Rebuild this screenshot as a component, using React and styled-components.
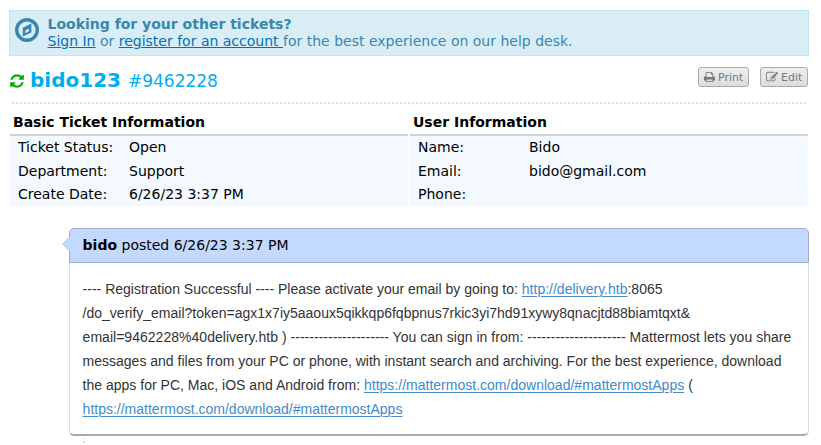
import React from "react";
import styled, { createGlobalStyle } from "styled-components";

const Global = createGlobalStyle`
  * { box-sizing: border-box; }
  body {
    margin: 0;
    background: #fff;
    color: #000;
    font: 14px/17px "DejaVu Sans", sans-serif;
    overflow: hidden;
  }
`;

const Page = styled.main`
  width: 821px;
  height: 445px;
  padding: 10px 12px 0 9px;
  overflow: hidden;
`;

const Banner = styled.section`
  display: flex;
  height: 46px;
  padding: 5px 5px 0;
  border: 1px solid #bce8f1;
  background: #d9edf7;
  color: #3a87ad;
`;

const BannerText = styled.div`
  margin-left: 8.5px;
  white-space: nowrap;
`;

const BannerLink = styled.a`
  color: #0072bc;
  text-decoration: underline;
`;

const Icon = styled.svg`
  display: block;
  flex: none;
  fill: currentColor;
`;

const CompassIcon = styled(Icon)`
  margin-top: 2px;
`;

const TitleRow = styled.header`
  display: flex;
  align-items: flex-start;
  height: 46px;
  padding-top: 11px;
`;

const RefreshLink = styled.a`
  margin: 6px 5px 0 0;
  color: #00b000;
`;

const Subject = styled.h1`
  margin: 0;
  color: #00aeef;
  font-size: 20px;
  line-height: 27px;
`;

const TicketNumber = styled.small`
  margin-left: 7px;
  color: #00aeef;
  font-size: 17px;
  line-height: 28px;
`;

const Actions = styled.div`
  display: flex;
  gap: 11px;
  margin-left: auto;
  margin-right: 1px;
`;

const ActionButton = styled.button`
  display: flex;
  align-items: center;
  gap: ${(p) => p.$gap}px;
  width: ${(p) => p.$width}px;
  height: 20px;
  padding: 1px 0 0 5px;
  border: 1px solid #aaa;
  border-radius: 3px;
  background: linear-gradient(#efefef, #dcdcdc);
  color: #777;
  font: 11px/18px "DejaVu Sans", sans-serif;
`;

const ButtonIcon = styled(Icon)`
  margin-top: -1px;
`;

const Divider = styled.div`
  width: 796px;
  height: 2px;
  margin-left: 3px;
  background: repeating-linear-gradient(90deg, #ddd 0 2px, transparent 2px 4px);
`;

const InfoGrid = styled.div`
  display: grid;
  grid-template-columns: 398px 398px;
  gap: 2px;
  margin: 8px 0 0 1px;
`;

const InfoTitle = styled.h2`
  height: 24px;
  margin: 0;
  padding: 2px 3px 0;
  border-bottom: 2px solid #cfd3d6;
  font-size: 14px;
  line-height: 17px;
`;

const InfoRows = styled.dl`
  display: grid;
  grid-template-columns: 111px 1fr;
  grid-template-rows: 24px 23px 23px;
  height: 70px;
  margin: 0;
  padding-left: 8px;
  background: #f4f9ff;
  line-height: 23px;
`;

const InfoLabel = styled.dt``;

const InfoValue = styled.dd`
  margin: 0;
`;

const Entry = styled.article`
  width: 740px;
  margin: 22px 0 0 60px;
`;

const EntryHeader = styled.header`
  position: relative;
  height: 35px;
  padding: 8px 12.6px;
  border: 1px solid #9cabcf;
  border-radius: 5px 5px 0 0;
  background: #c3d9ff;
`;

const Pointer = styled.svg`
  position: absolute;
  left: -8px;
  top: 7px;
`;

const EntryBody = styled.div`
  height: 173px;
  padding: 14px 12px 0 12.6px;
  border: 1px solid #ddd;
  border-top: 0;
  border-bottom: 2px solid #aaa;
  border-radius: 0 0 5px 5px;
  color: #333;
  font: 14px/24px "Liberation Sans", Arial, sans-serif;
  white-space: nowrap;
`;

const Line = styled.div`
  letter-spacing: ${(p) => p.$tracking || 0}px;
`;

const TextLink = styled.a`
  color: #428bca;
  text-decoration: underline;
  text-decoration-thickness: 1px;
  text-underline-offset: 2px;
`;

const ThreadLine = styled.div`
  width: 2px;
  height: 5px;
  margin: 2px 0 0 74px;
  background: repeating-linear-gradient(#ddd 0 1px, transparent 1px 3px, #ddd 3px 5px);
`;

const REFRESH =
  "M1639 1056q0 5-1 7-64 268-268 434.5t-478 166.5q-146 0-282.5-55t-243.5-157l-129 129q-19 19-45 19t-45-19-19-45v-448q0-26 19-45t45-19h448q26 0 45 19t19 45-19 45l-137 137q71 66 161 102t187 36q134 0 250-65t186-179q11-17 53-117 8-23 30-23h192q13 0 22.5 9.5t9.5 22.5zm25-800v448q0 26-19 45t-45 19h-448q-26 0-45-19t-19-45 19-45l138-138q-148-137-349-137-134 0-250 65t-186 179q-11 17-53 117-8 23-30 23h-199q-13 0-22.5-9.5t-9.5-22.5v-7q65-268 270-434.5t480-166.5q146 0 284 55.5t245 156.5l130-129q19-19 45-19t45 19 19 45z";
const PRINT =
  "M448 1536h896v-256h-896v256zm0-640h896v-384h-160q-40 0-68-28t-28-68v-160h-640v640zm1152 64q0-26-19-45t-45-19-45 19-19 45 19 45 45 19 45-19 19-45zm128 0v416q0 13-9.5 22.5t-22.5 9.5h-224v160q0 40-28 68t-68 28h-960q-40 0-68-28t-28-68v-160h-224q-13 0-22.5-9.5t-9.5-22.5v-416q0-79 56.5-135.5t135.5-56.5h64v-544q0-40 28-68t68-28h672q40 0 88 20t76 48l152 152q28 28 48 76t20 88v256h64q79 0 135.5 56.5t56.5 135.5z";
const EDIT =
  "M888 1184l116-116-152-152-116 116v56h96v96h56zm440-720q-16-16-33 1l-350 350q-17 17-1 33t33-1l350-350q17-17 1-33zm80 594v190q0 119-84.5 203.5t-203.5 84.5h-832q-119 0-203.5-84.5t-84.5-203.5v-832q0-119 84.5-203.5t203.5-84.5h832q63 0 117 25 15 7 18 23 3 17-9 29l-49 49q-14 14-32 8-23-6-45-6h-832q-66 0-113 47t-47 113v832q0 66 47 113t113 47h832q66 0 113-47t47-113v-126q0-13 9-22l64-64q15-15 35-7t20 29zm-96-738l288 288-672 672h-288v-288zm444 132l-92 92-288-288 92-92q28-28 68-28t68 28l152 152q28 28 28 68t-28 68z";

function InfoPanel({ title, rows }) {
  return (
    <section>
      <InfoTitle>{title}</InfoTitle>
      <InfoRows>
        {rows.map(([label, value]) => (
          <React.Fragment key={label}>
            <InfoLabel>{label}:</InfoLabel>
            <InfoValue>{value}</InfoValue>
          </React.Fragment>
        ))}
      </InfoRows>
    </section>
  );
}

export default function App() {
  return (
    <>
      <Global />
      <Page>
        <Banner>
          <CompassIcon width="24" height="24" viewBox="0 0 24 24">
            <circle cx="12" cy="12" r="10.3" fill="none" stroke="currentColor" strokeWidth="3.4" />
            <path fillRule="evenodd" d="M16.4 5.4V14.4L7.8 18.6V9.8ZM13.8 10.6L10.3 12.6V15.2L13.8 13.5Z" />
          </CompassIcon>
          <BannerText>
            <strong>Looking for your other tickets?</strong>
            <br />
            <BannerLink>Sign In</BannerLink> or <BannerLink>register for an account </BannerLink>
            for the best experience on our help desk.
          </BannerText>
        </Banner>

        <TitleRow>
          <RefreshLink>
            <Icon width="16" height="16" viewBox="0 0 1792 1792"><path d={REFRESH} /></Icon>
          </RefreshLink>
          <Subject>bido123</Subject>
          <TicketNumber>#9462228</TicketNumber>
          <Actions>
            <ActionButton $width={51} $gap={3}>
              <ButtonIcon width="11" height="12" viewBox="64 0 1664 1792"><path d={PRINT} /></ButtonIcon>
              Print
            </ActionButton>
            <ActionButton $width={48} $gap={3}>
              <ButtonIcon width="12" height="12" viewBox="0 0 1792 1792"><path d={EDIT} /></ButtonIcon>
              Edit
            </ActionButton>
          </Actions>
        </TitleRow>
        <Divider />

        <InfoGrid>
          <InfoPanel
            title="Basic Ticket Information"
            rows={[["Ticket Status", "Open"], ["Department", "Support"], ["Create Date", "6/26/23 3:37 PM"]]}
          />
          <InfoPanel
            title="User Information"
            rows={[["Name", "Bido"], ["Email", "bido@gmail.com"], ["Phone", ""]]}
          />
        </InfoGrid>

        <Entry>
          <EntryHeader>
            <Pointer width="8" height="16" viewBox="0 0 8 16">
              <path d="M8 0.5L0.7 8L8 15.5" fill="#c3d9ff" stroke="#b3c2e2" />
            </Pointer>
            <b>bido</b> posted 6/26/23 3:37 PM
          </EntryHeader>
          <EntryBody>
            <Line $tracking={0.005}>
              ---- Registration Successful ---- Please activate your email by going to: <TextLink>http://delivery.htb</TextLink>:8065
            </Line>
            <Line>/do_verify_email?token=agx1x7iy5aaoux5qikkqp6fqbpnus7rkic3yi7hd91xywy8qnacjtd88biamtqxt&amp;</Line>
            <Line $tracking={0.025}>
              email=9462228%40delivery.htb ) --------------------- You can sign in from: --------------------- Mattermost lets you share
            </Line>
            <Line>messages and files from your PC or phone, with instant search and archiving. For the best experience, download</Line>
            <Line $tracking={0.01}>
              the apps for PC, Mac, iOS and Android from: <TextLink>https://mattermost.com/download/#mattermostApps</TextLink> (
            </Line>
            <Line><TextLink>https://mattermost.com/download/#mattermostApps</TextLink></Line>
          </EntryBody>
        </Entry>
        <ThreadLine />
      </Page>
    </>
  );
}
